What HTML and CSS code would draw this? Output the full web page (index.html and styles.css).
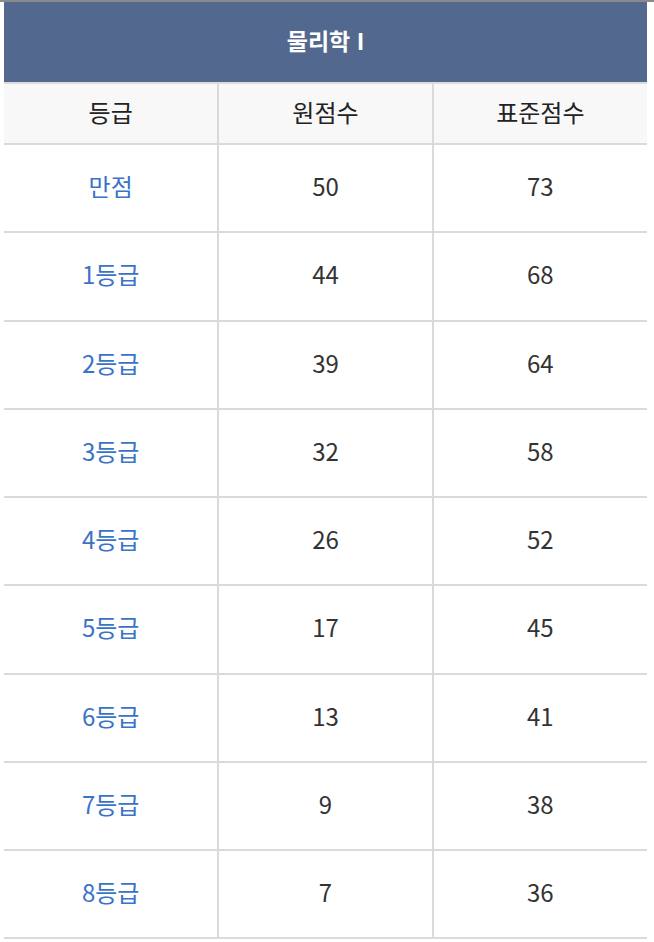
FILE: index.html
```html
<!DOCTYPE html>
<html lang="ko">
<head>
<meta charset="utf-8">
<link rel="stylesheet" href="styles.css">
</head>
<body>
<div class="topbar"></div>
<div class="wrap">
  <div class="title">물리학 I</div>
  <table class="grade">
    <thead>
      <tr><th>등급</th><th>원점수</th><th>표준점수</th></tr>
    </thead>
    <tbody>
      <tr><td class="lv">만점</td><td>50</td><td>73</td></tr>
      <tr><td class="lv">1등급</td><td>44</td><td>68</td></tr>
      <tr><td class="lv">2등급</td><td>39</td><td>64</td></tr>
      <tr><td class="lv">3등급</td><td>32</td><td>58</td></tr>
      <tr><td class="lv">4등급</td><td>26</td><td>52</td></tr>
      <tr><td class="lv">5등급</td><td>17</td><td>45</td></tr>
      <tr><td class="lv">6등급</td><td>13</td><td>41</td></tr>
      <tr><td class="lv">7등급</td><td>9</td><td>38</td></tr>
      <tr><td class="lv">8등급</td><td>7</td><td>36</td></tr>
    </tbody>
  </table>
</div>
</body>
</html>
```
FILE: styles.css
```css
html, body {
  margin: 0;
  padding: 0;
  background: #ffffff;
}
body {
  font-family: "Noto Sans CJK KR", "Noto Sans", sans-serif;
  color: #333333;
}
.topbar {
  height: 2px;
  background: #8a8a8a;
}
.wrap {
  padding: 0 7px 0 4px;
}
.title {
  height: 82px;
  box-sizing: border-box;
  background: #53688f;
  color: #ffffff;
  font-weight: 700;
  font-size: 23px;
  display: flex;
  align-items: center;
  justify-content: center;
  padding-bottom: 4px;
  border-bottom: 2px solid #dcdcdc;
}
.grade {
  width: 100%;
  border-collapse: collapse;
  table-layout: fixed;
}
.grade th, .grade td {
  text-align: center;
  vertical-align: middle;
  font-size: 24px;
  font-weight: 400;
  line-height: 28px;
  border-bottom: 2px solid #dadada;
  border-right: 2px solid #dadada;
  padding: 0 0 4px;
}
.grade th:last-child, .grade td:last-child {
  border-right: none;
}
.grade th {
  height: 55px;
  background: #f8f8f8;
  color: #222222;
}
.grade td {
  height: 82.25px;
}
.grade td.lv {
  color: #3b73c6;
}
```
